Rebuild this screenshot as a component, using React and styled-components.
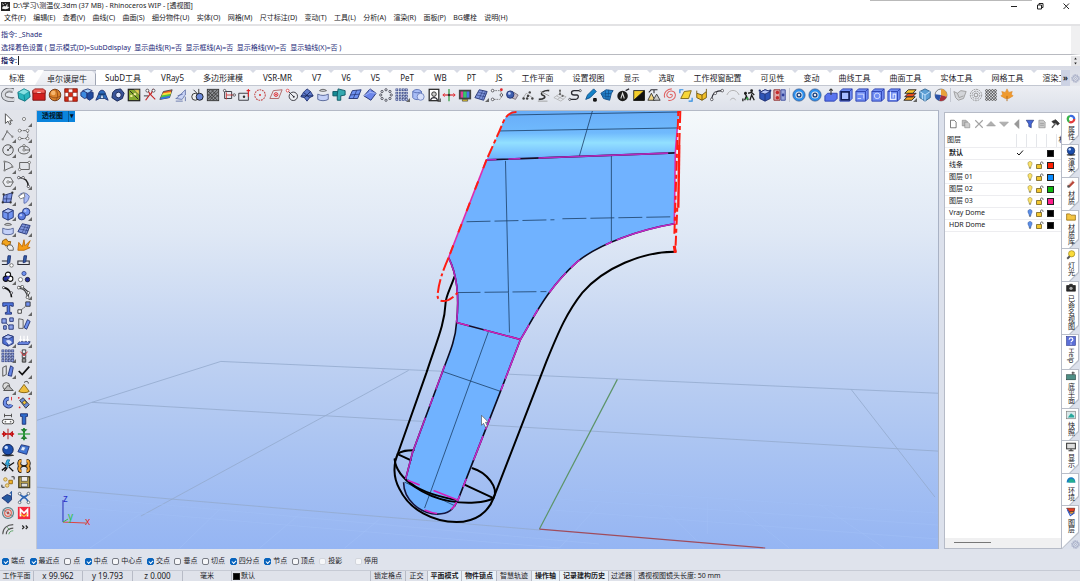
import React, { useState } from 'react';
import styled, { createGlobalStyle, css } from 'styled-components';

const BLUE = '#6f92f0';
const LIGHT = '#b4c6fa';
const NAVY = '#1f2f70';
const INK = '#2b2b33';
const RED = '#e0262b';

const line = (d, stroke = INK, w = 1.2, extra = {}) => (
  <path d={d} fill="none" stroke={stroke} strokeWidth={w} {...extra} />
);
const shape = (d, fill = BLUE, stroke = NAVY, w = 1) => (
  <path d={d} fill={fill} stroke={stroke} strokeWidth={w} strokeLinejoin="round" />
);
const dots = (points, fill = INK, r = 1.4, stroke = 'none') =>
  points.map(([x, y]) => <circle key={`${x}-${y}`} cx={x} cy={y} r={r} fill={fill} stroke={stroke} strokeWidth=".8" />);
const gridSquares = (n, fill, size) => {
  const step = 15 / n;
  return Array.from({ length: n * n }, (_, i) => (
    <rect key={i} x={1 + (i % n) * step} y={1 + Math.floor(i / n) * step} width={size} height={size} fill={fill} stroke={NAVY} strokeWidth=".6" />
  ));
};
const ring = (r, stroke, w = 1, extra = {}) => <circle cx="8" cy="8" r={r} fill="none" stroke={stroke} strokeWidth={w} {...extra} />;
const plane = (fill = BLUE) => <>{shape('M1 12 L5 3 L15 2 L11 12 Z', fill)}{line('M6 12 L10 2.5 M3 8 L13 7', NAVY, 0.8)}</>;
const cube = (fill = BLUE) => (
  <>
    {shape('M2 5 L8 2 L14 4 L14 12 L8 15 L2 12 Z', fill)}
    {shape('M2 5 L8 2 L14 4 L8 7 Z', LIGHT)}
    {line('M8 7 V15', NAVY, 1)}
  </>
);
const slab = (inner) => (
  <>
    {shape('M1 4 L4 1 H15 V12 L12 15 H1 Z', '#6f8cf2', '#2a3fae')}
    {line('M1 4 H12 V15 M12 4 L15 1', '#2a3fae', 1)}
    {inner}
  </>
);

const icons = {
  pipe: <>{line('M14 3 C6 0 0 6 4 11 C7 14 11 13 15 13', '#55585f', 5.4)}{line('M14 3 C6 0 0 6 4 11 C7 14 11 13 15 13', '#d9dbe0', 3.6)}{line('M13 4 C7 2 3 6 6 10 L14 12', '#888', 1)}</>,
  teal: <>{shape('M8 1 L14 4 L15 10 L9 15 L2 12 L1 5 Z', '#28b5bd', '#0f6a78')}{shape('M8 1 L14 4 L8 8 L1 5 Z', '#86e1e3', '#0f8a92', 0.6)}{line('M8 8 L9 15', '#0f8a92')}</>,
  redbox: <>{shape('M1 3 H15 V14 H1 Z', '#d2201f', '#741010')}{shape('M1 3 L3 1 H13 L15 3 V6 H1 Z', '#f0625a', '#941515')}{line('M6 5 H10', '#fff', 1)}</>,
  orange: <><circle cx="8" cy="8" r="6.6" fill="#d9822b" stroke="#6b3410" /><circle cx="6" cy="5.6" r="2.6" fill="#f6b56c" />{line('M2 9 C6 12 10 12 14 9 M8 1 C12 5 12 11 8 15', '#8b4513', 0.9)}</>,
  checker: <><rect x="1" y="1" width="14" height="14" fill="#fff" stroke="#881008" />{shape('M1 1 H5 V5 H1 Z M10 1 H15 V5 H10 Z M5 5 H10 V10 H5 Z M1 10 H5 V15 H1 Z M10 10 H15 V15 H10 Z', '#d92b14', '#76160b', 0.6)}</>,
  cubes: <>{shape('M1 5 L5 3 L8 5 V11 L5 12 L1 9 Z', '#3b8ae0')}{shape('M8 6 L11 4 L15 5 V11 L11 14 L8 12 Z', '#1f4a9e')}{shape('M3 3 L9 1 L14 3 L9 6 Z', '#a5d2ff')}</>,
  arch: <>{shape('M1 14 L4 7 C5 1 11 1 12 7 L15 14 L11 12 H5 Z', '#2c6bbd')}{shape('M6 12 L7 8 H9 L10 12 Z', '#cfe2fb', '#0f2d5d', 0.7)}{line('M4 7 H12', '#0f2d5d', 1.2)}</>,
  hexring: <>{shape('M5 2 L11 1 L15 6 L13 12 L7 15 L1 11 L2 5 Z', '#39549a', '#101f4a')}<circle cx="8.5" cy="8" r="3.2" fill="#dfe7ff" stroke="#101f4a" /></>,
  picture: <><rect x="1.5" y="1.5" width="13" height="13" fill="#86a92f" stroke="#222" strokeWidth="1.4" />{shape('M8 2 H14 V8 Z', '#e8d54e', '#555', 0.6)}{line('M3 3 L13 13', '#222', 1)}{dots([[5, 9], [9, 7]], '#f3ef9a', 1.4)}</>,
  cutred: <>{line('M3 14 L8 7 L14 13 M8 7 L5 2 M9 7 L12 1', '#c52626', 1.3)}{dots([[12, 3], [5, 3]], '#fff', 1.7, INK)}{line('M1 9 L6 9', INK, 1)}</>,
  rainbow: <>{shape('M1 13 L5 4 L15 2 L12 11 Z', '#ef5a24', '#444')}{shape('M3 9 L4.3 6 L14 4.6 L13.2 7 Z', '#f7e13a', 'none')}{shape('M2 11 L3 8.7 L13.3 6.8 L12.6 9 Z', '#45c84a', 'none')}{shape('M1.4 13 L2.2 10.8 L12.7 8.8 L12 11 Z', '#2d76e8', 'none')}</>,
  sheet: <>{shape('M2 12 C5 12 5 8 8 7 L13 2 V8 C11 9 11 12 9 13 Z', '#c9d4f6', '#6474a8')}{line('M4 9 L10 7 M2 15 H10 M13 10 V15', '#6474a8', 1)}</>,
  balls: <><circle cx="6" cy="10" r="4" fill="#eee" stroke="#222" /><circle cx="11" cy="10" r="4" fill="#6a88d8" stroke="#111" /><path d="M4 2 L8 6 M10 1 V6" stroke="#222" /></>,
  hatch: <><rect x="1.5" y="1.5" width="13" height="13" fill="#8e9094" stroke="#333" />{line('M2 5 L5 2 M2 9 L9 2 M2 13 L13 2 M4 14 L14 4 M8 14 L14 8 M2 3 L13 14 M2 7 L9 14 M6 2 L14 10', '#333', 0.9)}</>,
  rectcross: <>{line('M3 4 H11 V12 H3 Z', INK, 1)}{line('M5 8 H15 M5 5 V13', '#c33', 1)}{dots([[3, 3], [14, 8]], '#fff', 1.4, INK)}</>,
  rectarrow: <>{line('M2 6 H13 V14 H2 Z', INK, 1)}{line('M13 1 V10 M11 3 H15', RED, 1.3)}{dots([[8, 10]], '#333', 1.4)}</>,
  circledots: <>{ring(6, '#c24c4c', 1.2, { strokeDasharray: '2 1' })}{dots([[8, 8]], RED, 1.1)}</>,
  rhombus: <>{line('M1 12 L5 3 L15 2 L11 12 Z', '#b06a6a', 1.1)}<circle cx="8" cy="7.5" r="2.2" fill="none" stroke={RED} />{dots([[8, 7.5]], RED, 1)}</>,
  circlepoint: <><circle cx="9.5" cy="9.5" r="4.8" fill="#eceef2" stroke={INK} />{line('M3 3 L10 10', INK, 1)}{dots([[3, 3]], '#fff', 1.6, RED)}{dots([[10, 10]], INK, 1.1)}</>,
  cluster: <>{shape('M8 1 L12 4 L15 9 L11 11 L8 15 L5 11 L1 10 L4 5 Z', '#5d79ca')}{line('M4 5 L11 11 M12 4 L5 11 M1 9 L15 9', '#101f52', 0.9)}</>,
  bowl: <>{shape('M2 7 V13 C5 15 11 15 14 13 V7 C10 9 6 9 2 7 Z', '#c3d0f8', '#4f5f92')}{line('M4 3 C6 1 10 1 12 3 C10 4 6 4 4 3', '#555', 1)}</>,
  clamp: <>{shape('M1 4 H9 V9 H1 Z', '#158a94', '#0b5560')}{shape('M7 1 L15 3 V8 L10 9 V14 H6 V7 Z', '#35a9b0', '#0b5560')}</>,
  plane: plane(),
  diamond: <>{shape('M1 9 L8 1 L15 6 L9 14 Z', '#6c86ea')}{line('M8 1 V5 L1 9 M8 5 L15 6', LIGHT, 0.8)}</>,
  dotring: <>{dots([[8, 2], [12.5, 4], [14, 8], [12.5, 12], [8, 14], [3.5, 12], [2, 8], [3.5, 4]], '#dfe3ef', 1.3, INK)}</>,
  grid4: gridSquares(4, '#b9c6ee', 2.2),
  cyl: <>{shape('M2 4 C4 1 10 1 12 4 V11 C10 14 4 14 2 11 Z', '#a8bdf6', '#546ab0')}<circle cx="11" cy="10" r="4" fill="#d7e0fb" stroke="#6b80bd" />{line('M2 4 C5 6 9 6 12 4', '#546ab0', 1)}</>,
  portrait: <><rect x="2.5" y="1.5" width="11" height="13" fill="#fff" stroke="#222" strokeWidth="1.4" /><circle cx="8" cy="7" r="2.6" fill="#ccc" stroke="#222" />{line('M4 14 C5 10 11 10 12 14', INK, 1.2)}</>,
  axes: <>{line('M1 8 H15', RED, 1.4)}{line('M8 1 V15', '#2d9a3c', 1.4)}{dots([[8, 8]], '#333', 1.4)}{line('M3 6 L1 8 L3 10 M13 6 L15 8 L13 10', RED, 1)}</>,
  monitor: <><rect x="1" y="2" width="14" height="11" fill="#444" /><rect x="3" y="4" width="3" height="7" fill="#e0409a" /><rect x="6" y="4" width="4" height="7" fill="#36c46c" /><rect x="10" y="4" width="3" height="7" fill="#4a78ec" />{shape('M5 13 H11 V15 H5 Z', '#e6c930', '#333', 0.7)}</>,
  meshplane: <>{shape('M1 11 L6 2 L15 4 L11 14 Z', '#7f95dc')}{line('M3 8 L13 10 M5 5 L14 7 M6 12 L10 3 M9 13 L13 4', NAVY, 0.6)}</>,
  curvepts: <>{line('M3 3 H11 C14 4 14 12 11 13 H3', '#777', 1, { strokeDasharray: '2 1' })}{dots([[3, 3], [3, 13], [13, 8]], '#fff', 1.5, INK)}{dots([[13, 2]], RED, 1.6)}</>,
  ballgrey: <>{shape('M10 5 L15 8 L12 13 L7 11 Z', '#c5b9c2', '#77707a')}<circle cx="6" cy="7.5" r="4.2" fill="#3f5faf" stroke={NAVY} /><circle cx="5" cy="6.2" r="1.5" fill="#c0d0fa" /></>,
  points: <>{line('M2 12 L6 6 L13 11', '#999', 0.9)}{dots([[3, 12], [8, 9], [10, 5], [13, 12], [7, 12]], '#444', 1.4)}</>,
  pathpts: <>{line('M2 13 C8 13 12 10 6 8 C3 6 8 2 14 3', '#333', 1.8)}{line('M1 15 H12 M4 4 L14 9', '#999', 1)}</>,
  gridpts: <>{line('M1 11 L7 7 L15 10 L9 15 Z M4 9 L12 13 M11 9 L5 13', '#aaa', 0.8)}{dots([[8, 3], [8, 7], [11, 9]], '#666', 1.2)}{line('M8 3 V7', '#666', 1)}</>,
  scurve: <>{line('M14 3 H7 C3 3 3 8 7 8 H10 C13 8 12 13 9 13 H2', INK, 1.5)}{dots([[14, 3], [2, 13]], '#fff', 1.2, INK)}</>,
  dropper: <>{shape('M2 13 L4 8 L11 1 L14 4 L7 11 Z', '#1583c8', '#0b4d86')}{shape('M11 12 H14 V15 H11 Z', '#222', '#000')}</>,
  meshblue: <>{shape('M1 6 L7 2 L15 3 L13 6 L11 14 L4 12 Z', '#2585cf', '#114a85')}{line('M3 9 L12 10 M6 3 L7 13 M10 2 L9 13 M2 7 L13 6', '#114a85', 0.8)}</>,
  ablack: <><circle cx="7.5" cy="9" r="6" fill="#1c1c1c" />{line('M5.5 12 L7.5 6 L9.5 12', '#ddd', 1.2)}{line('M11 3 L15 1', INK, 1.4)}</>,
  halfsq: <><rect x="2" y="3" width="12" height="11" fill="#f6cf2b" stroke="#222" />{shape('M14 3 V14 H2 Z', '#111', '#111')}</>,
  trilog: <>{shape('M1 14 L5 6 L9 14 Z', '#f0d37c', '#333')}{shape('M7 14 L11 7 L15 14 Z', '#c9c9c9', '#333')}{line('M4 2 H12 M8 2 V6 M2 5 L5 2', INK, 1.2)}</>,
  spiral: line('M8 8 C9 6 12 8 10 10 C7 13 3 9 5 6 C7 2 13 3 14 7 C15 12 10 15 6 14 M2 11 C0 5 5 1 10 1', '#de6262', 1.2),
  yellowplane: <>{shape('M2 12 L6 4 L14 3 L11 12 Z', '#f8d637', '#7a6413')}{line('M1 6 V2 H5 M11 15 H15 V11', '#2c8be0', 1.4)}</>,
  yellowbox: <>{shape('M2 6 L8 8 L13 4 V11 L8 14 L2 11 Z', '#f2c02a', '#6d520b')}{line('M2 3 V6 M13 1 V4 M8 8 V14', '#6d520b', 1)}</>,
  arcpts: <>{line('M2 14 C2 5 8 3 14 3', INK, 1.2)}{dots([[2, 13], [6, 6], [14, 3]], '#fff', 1.5, INK)}</>,
  lightarc: <>{line('M1 8 C4 1 12 1 15 8', '#aaa', 1)}{line('M5 14 C6 11 10 11 11 14', '#aaa', 1)}</>,
  runners: <>{line('M3 14 L5 9 L3 6 M5 9 L7 14 M9 14 L11 8 L14 14 M7 6 L11 5 L14 8 M1 12 V15', '#1c1c1c', 1.5)}{dots([[4, 6], [11, 3]], '#1c1c1c', 1.6)}{dots([[6, 12]], '#36a048', 1.4)}</>,
  bluebox: <>{cube('#2e55b8')}{dots([[2, 3], [14, 3]], '#1b2e70', 1.3)}</>,
  gearred: <>{shape('M1 2 H8 V14 H1 Z', '#dfa9a9', '#8d2d2d')}{dots([[5, 5], [5, 11]], '#c52a2a', 2)}{shape('M9 2 H14 V14 H9 Z', '#98a6dc', '#3a4a9b')}{dots([[11.5, 8]], '#2e3f9c', 1.6)}</>,
  swirl: <>{ring(5.5, '#2c90ee', 2.8)}{ring(7, '#173f7c', 0.7)}{ring(2.2, '#173f7c', 1.5)}</>,
  boxup: <>{shape('M1 9 L4 6 H15 V12 L12 15 H1 Z', '#5a74ee', '#2a3fae')}{line('M8 1 V8 M6 3 L8 1 L10 3', '#333', 1.2)}</>,
  boxdark: <>{slab()}<rect x="2.5" y="4.5" width="9" height="9" fill="#a8bcff" stroke="#101a50" strokeWidth="1.8" /></>,
  slab: slab(line('M3 7 H10 V12 M3 12 H7', '#dbe3ff', 1)),
  slabround: slab(<circle cx="7" cy="9" r="3.2" fill="none" stroke="#dbe3ff" />),
  pane: slab(<>{line('M4 4 V13 H10 V7 H7 V11', '#e8edff', 1.2)}</>),
  stack: <>{shape('M1 14 L5 10 H14 L10 14 Z', '#f5a623', '#222')}{shape('M2 10 L6 6 H15 L11 10 Z', '#e84c22', '#222')}{shape('M2 6 L6 2 H15 L11 6 Z', '#f7c52d', '#222')}</>,
  hex: <>{shape('M8 1 L14 4 V11 L8 15 L2 11 V4 Z', '#5d9fd4', '#2c5f8d')}{line('M2 4 L8 8 L14 4 M8 8 V15 M5 6 V13', '#cfe8ff', 1)}</>,
  pie: <><circle cx="8" cy="8" r="6.8" fill="#e9eef6" stroke="#555" strokeWidth=".8" />{shape('M8 8 V1.2 A6.8 6.8 0 0 1 14.5 10 Z', '#e8a13a', 'none')}{shape('M8 8 L14.5 10 A6.8 6.8 0 0 1 6 14.5 Z', '#a82f3a', 'none')}{shape('M8 8 L6 14.5 A6.8 6.8 0 0 1 1.3 7 Z', '#2a53a8', 'none')}</>,
  cap: <>{shape('M1 4 L5 6 L9 3 L15 4 L12 12 L6 14 L3 11 Z', '#d3d5d9', '#999')}{line('M5 6 L7 11 L12 9', '#999', 1)}</>,
  rings: <>{ring(6.5, '#888', 1, { strokeDasharray: '2 1' })}{ring(4.4, '#888', 1, { strokeDasharray: '2 1' })}{ring(2.2, '#888', 1)}</>,
  hexdots: <>{dots([3, 6.3, 9.7, 13].flatMap(y => [3, 6.3, 9.7, 13].map(x => [x, y])), '#eee', 1.2, '#222')}</>,
  leaf: <>{shape('M8 1 L10 5 L14 4 L13 7 L15 9 L10 12 L6 12 L1 9 L3 7 L2 4 L6 5 Z', '#ef9a2f', '#d98220', 0.6)}{line('M8 9 V15', '#b0630f', 1)}</>,

  cursor: <path d="M5 2 V13 L8 10.5 L10 14.5 L11.5 13.5 L10 10 H13 Z" fill="#fff" stroke="#444" />,
  point: <circle cx="8" cy="8" r="1.8" fill="#fff" stroke="#777" />,
  polyline: <>{line('M2 13 L7 4 L13 10', '#555', 1)}{dots([[2, 13], [7, 4], [13, 10]], '#888', 1.3)}</>,
  curve: <>{line('M3 3 H10 C14 4 13 12 9 12 H3', '#555', 1, { strokeDasharray: '3 1' })}{dots([[3, 3], [12, 3], [3, 12], [12, 12]], '#fff', 1.6, '#555')}</>,
  circle: <>{ring(6, '#555', 1.1)}{line('M8 8 L12 4', '#555', 1)}{dots([[8, 8], [11, 5]], '#555', 1.2)}</>,
  ellipse: <><ellipse cx="8" cy="8" rx="6.5" ry="4.5" fill="none" stroke="#555" /><path d="M8 8 V3 M8 8 H14" stroke="#555" />{dots([[8, 8], [8, 3]], '#fff', 1.3, '#555')}</>,
  arc: <>{line('M4 3 V13 L13 9 C13 6 9 3 4 3', '#555', 1)}{dots([[4, 3], [4, 13], [13, 9]], '#888', 1.3)}</>,
  rect: <>{line('M3 4 H14 V12 H3 Z', '#555', 1)}{dots([[3, 12], [14, 4]], '#fff', 1.4, '#555')}</>,
  polygon: <>{shape('M5 3 H11 L14 8 L11 13 H5 L2 8 Z', '#eef0f4', '#555')}{line('M8 8 H14', '#555', 1)}{dots([[8, 8]], '#fff', 1.4, '#555')}</>,
  fillet: <>{line('M2 3 C9 3 13 7 13 14', '#222', 1.7)}{dots([[2, 3], [7, 3], [13, 13]], '#fff', 1.4, INK)}</>,
  surface: <>{shape('M3 5 L13 2 L11 13 L2 13 Z', '#8199e6')}{line('M7 4 L6 13 M3 9 H12', NAVY, 0.8)}{dots([[3, 4], [13, 2], [11, 13], [2, 13]], '#333', 1.3)}</>,
  sweep: <>{shape('M2 6 C4 1 11 1 14 6 C13 12 10 14 8 14 L8 8 Z', '#a9bbf6', '#5568a8')}{shape('M2 6 L8 2 L9 7 L4 9 Z', '#fff', '#777')}</>,
  cube: cube(),
  spheres: <><circle cx="10.5" cy="5.5" r="4.2" fill={BLUE} stroke={NAVY} /><circle cx="5.5" cy="10.5" r="4.2" fill="#5c7ce0" stroke={NAVY} />{dots([[9.5, 4.3], [4.5, 9.3]], LIGHT, 1.4)}</>,
  puzzle: <>{shape('M2 3 L6 1 L8 4 L11 4 L10 9 L5 9 L4 7 L1 7 Z', '#f3a41c', '#8a5200')}{shape('M8 8 L12 8 L14 11 L14 14 L9 14 L7 11 Z', '#eee', '#555')}</>,
  burst: shape('M1 14 L2 5 L6 10 L8 2 L9 9 L15 3 L12 10 L15 11 L8 14 Z', '#f59b14', '#c06a06'),
  trim: <>{line('M1 8 H7 M1 12 H7', INK, 1.3)}{shape('M7 12 L8 2 L11 2 L10 10 Z', '#315ea8')}{dots([[12, 13]], '#fff', 2, '#555')}</>,
  split: <>{line('M1 8 H14 V12 H1 Z', INK, 1.2)}{shape('M7 10 L8 2 L11 2 L10 9 Z', '#315ea8')}</>,
  union: <><circle cx="8" cy="5.4" r="3" fill="#fff" stroke="#111" strokeWidth="1.2" /><circle cx="5.4" cy="10" r="3" fill="#24309a" stroke="#111" strokeWidth="1.2" /><circle cx="10.6" cy="10" r="3" fill="#fff" stroke="#111" strokeWidth="1.2" />{dots([[8, 8.5]], '#333ba8', 1.8)}</>,
  three: <>{dots([[8, 4]], BLUE, 2.4, NAVY)}{dots([[4, 11]], '#fff', 2.4, '#555')}{dots([[12, 11]], '#24309a', 2.6, '#111')}</>,
  arcblack: <>{line('M2 3 C8 3 12 8 12 14', '#111', 1.9)}{dots([[3, 3], [12, 9]], '#fff', 1.3, INK)}</>,
  arcnodes: <>{line('M2 2 H6 L13 8 V14 M3 4 C9 4 11 9 12 14', '#333', 1.2)}{dots([[6, 2], [13, 9], [12, 14], [2, 3]], '#fff', 1.6, '#333')}</>,
  text: shape('M2 2 H14 V6 H12 V5 H10 V13 H12 V15 H5 V13 H7 V5 H5 V6 H2 Z', '#4f76e2'),
  scale: <>{shape('M1 10 H5 V14 H1 Z', '#fff', '#333')}{shape('M10 1 H15 V6 H10 Z', '#6f8ff0', '#333')}{line('M5 10 L10 6', '#333', 1, { strokeDasharray: '2 1' })}</>,
  boxes: <>{shape('M1 2 H6 V7 H1 Z M10 1 H14 V5 H10 Z M3 10 H6 V14 H3 Z M9 9 H14 V14 H9 Z', '#8ea4ea')}{line('M6 7 L9 10', NAVY, 1)}</>,
  rotateblue: <>{line('M2 2 V13 H7 V3 Z', '#555', 1)}{shape('M8 12 L12 3 L15 5 L11 14 Z', BLUE)}</>,
  boxround: <>{cube('#4e70d6')}{shape('M5 9 C8 6 12 8 13 11 L9 14 Z', '#dbe4ff', '#4e64b0')}</>,
  lights: <>{shape('M1 12 L3 10 H15 L13 13 H1 Z', '#7190f0')}{line('M4 3 V9 M8 3 V9 M12 3 V9 M3 7 L4 9 L5 7 M7 7 L8 9 L9 7 M11 7 L12 9 L13 7', '#fff', 1.3)}</>,
  grid3: gridSquares(4, '#8fa0dc', 2.4),
  column: <>{shape('M6 1 H10 V5 H6 Z M6 6 H10 V10 H6 Z', '#e8ebf2', '#333')}{shape('M6 11 H10 V15 H6 Z', '#999', '#333')}{line('M4 3 L8 8 L12 3', RED, 1)}</>,
  mirror: <>{line('M2 4 L6 2 V12 L2 14 Z', '#555', 1.1)}{shape('M8 13 L11 2 L14 4 L12 14 Z', '#6685e6')}</>,
  check: line('M2 8 L6 12 L14 3', '#111', 2),
  shapes: <><circle cx="6" cy="7" r="4" fill="#ddd" stroke="#555" />{shape('M3 12 L8 6 L14 12 Z', '#bbb', '#444')}</>,
  cone: <>{shape('M2 13 L8 5 L14 13 C11 15 5 15 2 13 Z', '#efbe3c', '#7d5d10')}{line('M8 3 C10 1 13 1 13 4', '#333', 1.1)}</>,
  hook: <>{line('M9 3 C4 3 3 9 6 11 C9 13 11 12 12 10', NAVY, 4.4)}{line('M9 3 C4 3 3 9 6 11 C9 13 11 12 12 10', '#6e8fe8', 2.6)}{line('M12 1 V5', RED, 1)}</>,
  capsule: <>{shape('M3 5 L7 2 L14 10 L10 14 Z', '#6c8bd6', '#333')}{shape('M6 7 L9 5 L11 8 L8 10 Z', '#f2c53a', '#333', 0.7)}{dots([[2, 2], [14, 3], [3, 13]], RED, 1)}</>,
  link: <>{line('M4 2 V6 M12 2 V6 M4 4 H12', '#444', 1)}<rect x="1.5" y="8.5" width="13" height="5" rx="2.5" fill="#fff" stroke="#333" />{dots([[5, 11], [11, 11]], '#777', 1)}</>,
  bolt: shape('M4 2 H12 V5 H10 V14 H6 V5 H4 Z', '#2f6ccc'),
  hsplit: <>{line('M1 8 H15', RED, 2)}{shape('M6 8 L3 5 V11 Z M10 8 L13 5 V11 Z', RED, '#a00')}{line('M8 2 V14', '#a33', 1.2)}</>,
  vsplit: <>{line('M8 1 V15', '#2c9a3a', 2.2)}{line('M1 8 H15', '#2c9a3a', 1.4)}{shape('M8 6 L5 3 H11 Z M8 10 L5 13 H11 Z', '#2c9a3a', '#156b22')}</>,
  ball: <><ellipse cx="8" cy="14" rx="7" ry="1.4" fill="#333" /><circle cx="8" cy="7.5" r="6" fill="#1c4fae" stroke="#0b1d4a" /><circle cx="6" cy="5" r="2" fill="#c7dcff" /></>,
  book: <>{shape('M1 10 L5 2 L14 4 L11 13 Z', '#3f76d6')}{shape('M4 8 L6 4 L10 5 L8 9 Z', '#e2edff', '#3558a0', 0.6)}</>,
  lightning: <>{line('M1 4 L6 8 M15 4 L9 8 M1 13 L6 9 M14 14 L9 9 M4 14 L7 10', '#111', 1.5)}{shape('M7 1 L10 1 L8 5 H10 L7 10 L7 6 H5 Z', '#39b6e8', '#1470a0')}</>,
  brackets: <>{line('M5 2 C2 2 2 7 4 8 C2 9 2 14 5 14 M11 2 C14 2 14 7 12 8 C14 9 14 14 11 14', '#111', 4.4)}{line('M5 2 C2 2 2 7 4 8 C2 9 2 14 5 14 M11 2 C14 2 14 7 12 8 C14 9 14 14 11 14', '#f2a12c', 2.6)}{line('M5 8 H11', '#111', 1.4)}</>,
  yellowdots: <>{line('M1 14 H4 M12 2 H15 M1 11 V14 M15 2 V5', '#333', 1.2)}{dots([[5, 5], [7, 12]], '#f2d98c', 2, '#a87a1a')}{shape('M9 6 H13 V10 H9 Z', '#f2b42c', '#94660c')}</>,
  floppy: <><rect x="2" y="2" width="12.5" height="12.5" fill="#b39a4a" stroke="#3b3418" strokeWidth="1.3" /><rect x="5" y="2" width="7" height="5" fill="#eee" stroke="#333" strokeWidth=".6" /><rect x="5" y="9.5" width="7" height="4" fill="#ddd" stroke="#333" strokeWidth=".6" /></>,
  bluesolid: <>{shape('M1 8 L7 4 L12 6 L12 10 L8 14 L5 11 Z', '#2659a0')}{line('M10 3 L12 1 V6', '#2659a0', 1.2)}</>,
  cage: <>{line('M3 3 C6 8 10 8 13 3 M3 13 C6 6 10 6 13 13', '#2e66b4', 1.8)}{dots([[3, 3], [13, 3], [3, 13], [13, 13]], '#fff', 1.5, '#345')}</>,
  target: <>{ring(6.2, '#5c8088', 1.4)}{ring(3.8, '#e26a5a', 1.4)}{dots([[8, 8]], '#d43b2f', 1.6)}{line('M2 4 L14 12', '#5c8088', 0.8)}</>,
  mlogo: <><rect x="1" y="1" width="14" height="14" fill="#f3283e" />{line('M4 12 V4 L8 8 L12 4 V12', '#fff', 2)}{line('M4 9 L8 12 L12 9', '#ffc32b', 1.4)}</>,
  offset: <>{line('M2 14 C2 7 7 3 14 3', '#555', 1.2)}{line('M6 14 C6 10 9 7 14 7', '#555', 1.2)}{line('M9 14 C9 12 11 10 14 10 M7 6 L10 9', '#4b9a55', 1)}</>,
  more: line('M6 4 L8 6 L6 8 M10 4 L12 6 L10 8', '#222', 1.3),

  page: shape('M4 2 H10 L13 5 V14 H4 Z', '#fff', '#333'),
  pages: <>{shape('M2 2 H8 L10 4 V11 H2 Z', '#bbb', '#888')}{shape('M6 5 H11 L14 8 V14 H6 Z', '#ccc', '#888')}</>,
  cross: line('M2 2 L14 14 M14 2 L2 14', '#a2a2a2', 1.8),
  up: shape('M1 11 L8 4 L15 11 Z', '#b0b0b0', '#999'),
  down: shape('M1 5 L8 12 L15 5 Z', '#b0b0b0', '#999'),
  left: shape('M11 1 L4 8 L11 15 Z', '#999', '#888'),
  filter: shape('M2 2 H14 L10 8 V14 L6 12 V8 Z', '#4567d8'),
  paste: <>{shape('M3 2 H10 L13 5 V14 H3 Z', '#ccc', '#888')}{line('M5 7 H11 M5 10 H11', '#888', 1)}</>,
  hammer: <>{shape('M3 4 L9 1 L15 7 L12 10 L9 6 L6 7 Z', '#333', '#222')}{line('M9 7 L3 14', '#555', 2.2)}</>,
  bulb: <>{shape('M8 1 C3 1 3 7 6 10 V13 H10 V10 C13 7 13 1 8 1 Z', '#fbe36a', '#8a7a2c')}{line('M6 14.5 H10', '#666', 1.4)}</>,
  bulboff: <>{shape('M8 1 C3 1 3 7 6 10 V13 H10 V10 C13 7 13 1 8 1 Z', '#5c8fe8', '#2f529a')}{line('M6 14.5 H10', '#444', 1.4)}</>,
  lock: <>{shape('M1 7 H11 V15 H1 Z', '#f3c72f', '#5f4c0e', 1.4)}{line('M9 7 V4 C9 1 14 1 14 4 V6', '#555', 1.6)}</>,

  wheel: <>{ring(5.2, '#e23b3b', 3.6, { strokeDasharray: '11 22' })}{ring(5.2, '#38b54a', 3.6, { strokeDasharray: '11 22', strokeDashoffset: -11 })}{ring(5.2, '#3a6be0', 3.6, { strokeDasharray: '11 22', strokeDashoffset: -22 })}</>,
  tube: <>{line('M4 12 L12 4', '#b8463a', 5)}{line('M3 10 L10 3', '#f2e2da', 2)}{dots([[4, 12]], '#555', 2)}</>,
  folder: shape('M1 3 H6 L8 5 H15 V13 H1 Z', '#f4c542', '#94690c', 1.2),
  lamp: <><circle cx="9" cy="6" r="5" fill="#fadb3a" stroke="#927a14" />{line('M6 10 L2 14', '#555', 3)}</>,
  camera: <>{shape('M1 4 H5 L6 2 H10 L11 4 H15 V13 H1 Z', '#2b2b2b', '#111')}<circle cx="8" cy="8.5" r="2.6" fill="#aaa" /></>,
  help: <><rect x="1" y="1" width="14" height="14" fill="#5b6fd8" stroke="#2d3a8c" />{line('M5 6 C5 2 11 2 11 6 C11 8 8 8 8 10 M8 12 V13.5', '#fff', 1.8)}</>,
  cplane: <><rect x="1" y="6" width="14" height="8" fill="#4f8f86" stroke="#1e3f3b" />{line('M9 3 H14 M11 1 V6', '#333', 1.4)}</>,
  photo: <><rect x="1" y="2" width="14" height="12" fill="#d9e8ea" stroke="#777" />{shape('M3 12 L8 5 L13 9 V12 Z', '#29a89c', 'none')}</>,
  screen: <><rect x="1" y="2" width="14" height="9" fill="#ddd" stroke="#333" strokeWidth="1.6" />{line('M8 11 V14 M4 14 H12', '#333', 1.6)}</>,
  env: <>{shape('M1 12 C1 1 15 1 15 12 Z', '#1b7fc0', 'none')}{shape('M4 12 C4 5 12 4 15 12 Z', '#23b08e', 'none')}</>,
  layers: <>{shape('M1 2 H14 L13 7 L6 8 Z', '#e43d24', '#5a140a')}{shape('M4 8 L13 7 L10 12 Z', '#f1a13c', '#333')}{line('M2 4 L7 14 L14 9', '#2e55c8', 1.8)}</>,
  gear: <>{ring(5, '#8f98b8', 1.4)}{ring(6.8, '#8f98b8', 1.6, { strokeDasharray: '2 2.2' })}{ring(1.8, '#8f98b8', 1)}</>,
  spinup: shape('M4 11 L8 5 L12 11 Z', '#222', 'none'),
  spindown: shape('M4 5 L8 11 L12 5 Z', '#222', 'none'),
  app: <><rect x="0" y="0" width="16" height="16" fill="#222" />{shape('M2 12 C2 7 6 6 8 8 L12 3 L11 8 L15 9 L12 12 L8 13 Z', '#f3f3f3', 'none')}{line('M2 3 L5 5 M7 2 L9 4', '#ddd', 1.6)}</>,
};

const topGroups = [
  'pipe teal redbox orange checker cubes arch hexring picture cutred rainbow sheet balls hatch rectcross rectarrow circledots rhombus circlepoint cluster bowl clamp plane diamond dotring grid4 cyl portrait axes monitor meshplane curvepts ballgrey points pathpts gridpts scurve dropper meshblue ablack halfsq trilog spiral yellowplane yellowbox arcpts lightarc runners bluebox gearred',
  'swirl swirl boxup boxdark slab slabround pane stack hex pie',
  'cap rings hexdots leaf',
].map(group => group.split(' '));

const flagged = ['grid4', 'portrait', 'meshplane', 'stack'];

const sideIcons = (
  'cursor point polyline curve circle ellipse arc rect polygon fillet surface sweep cube spheres bowl meshplane ' +
  'puzzle burst trim split union three arcblack arcnodes text scale boxes rotateblue boxround lights grid3 column ' +
  'mirror check shapes cone hook capsule link bolt hsplit vsplit ball book lightning brackets yellowdots floppy ' +
  'bluesolid cage target mlogo offset more'
).split(' ');

const sideFlagged = [
  'point', 'polyline', 'curve', 'circle', 'ellipse', 'arc', 'rect', 'polygon', 'fillet', 'surface', 'sweep', 'cube',
  'spheres', 'bowl', 'meshplane', 'union', 'arcnodes', 'scale', 'boxround', 'lights', 'grid3', 'column', 'mirror',
  'check', 'shapes', 'cone',
];

const menus = [
  '文件(F)', '编辑(E)', '查看(V)', '曲线(C)', '曲面(S)', '细分物件(U)', '实体(O)', '网格(M)', '尺寸标注(D)', '变动(T)',
  '工具(L)', '分析(A)', '渲染(R)', '面板(P)', 'BG螺栓', '说明(H)',
];

const toolTabs = [
  '标准', '卓尔谟犀牛', 'SubD工具', 'VRay5', '多边形建模', 'VSR-MR', 'V7', 'V6', 'V5', 'PeT', 'WB', 'PT', 'JS', '工作平面',
  '设置视图', '显示', '选取', '工作视窗配置', '可见性', '变动', '曲线工具', '曲面工具', '实体工具', '网格工具', '渲染工具',
];

const layers = [
  { name: '默认', color: '#000', current: true },
  { name: '线条', color: '#ff1e00', on: true },
  { name: '图层 01', color: '#0a8cff', on: true },
  { name: '图层 02', color: '#0db80d', on: true },
  { name: '图层 03', color: '#ff1e8c', on: true },
  { name: 'Vray Dome', color: '#000' },
  { name: 'HDR Dome', color: '#000' },
];

const panelTabs = [
  ['属性', 'wheel', 32], ['渲染', 'ball', 33], ['材质', 'tube', 33], ['材质库', 'folder', 38], ['灯光', 'lamp', 33],
  ['已命名视图', 'camera', 53], ['Help', 'help', 35], ['底平面', 'cplane', 39], ['快照', 'photo', 32], ['显示', 'screen', 33],
  ['环境', 'env', 32], ['图层', 'layers', 36],
];

const snaps = [
  ['端点', true], ['最近点', true], ['点', false], ['中点', true], ['中心点', false], ['交点', true], ['垂点', false],
  ['切点', false], ['四分点', true], ['节点', true], ['顶点', false], ['投影', false, true], ['停用', false, true],
];

const GlobalStyle = createGlobalStyle`
  * { box-sizing: border-box; }

  body {
    margin: 0;
    color: #1a1a1e;
    background: #dfe3ec;
    font-family: "Noto Sans", "Noto Sans CJK SC", sans-serif;
    font-size: 7px;
    line-height: 10px;
  }

  button, input {
    margin: 0;
    padding: 0;
    border: none;
    background: none;
    color: inherit;
    font: inherit;
  }
`;

function Icon({ name, size = 14 }) {
  return <Svg viewBox="0 0 16 16" $size={size} aria-hidden="true">{icons[name]}</Svg>;
}

function Tool({ name, flag }) {
  return (
    <ToolButton type="button" aria-label={name} $flag={flag}>
      <Icon name={name} />
    </ToolButton>
  );
}

function Model() {
  const upper = 'M513 111 L680 111 L678 128 L676 153 L675 224 C640 230 600 244 578 262 C547 290 536 315 521 340 L457 323 C459 305 460 280 449 258 L487 160 L500 131 C504 121 506 115 513 111 Z';
  const lower = 'M457 323 C456 342 448 358 443 372 L413 453 L406 480 C401 498 419 515 438 515 C449 515 453 511 458 502 L501 392 L521 340 Z';
  const rightSide = 'M675 224 C640 230 600 244 578 262 C547 290 536 315 521 340 L501 392 L458 502';
  const leftSide = 'M449 258 C460 280 459 305 457 323 C456 342 448 358 443 372 L413 453 L406 480';
  return (
    <Scene viewBox="37 111 902 439" preserveAspectRatio="none" role="img" aria-label="透视图">
      <defs>
        <linearGradient id="band" x1="0" y1="111" x2="0" y2="160" gradientUnits="userSpaceOnUse">
          <stop offset="0" stopColor="#68adf8" />
          <stop offset=".45" stopColor="#70bafd" />
          <stop offset=".65" stopColor="#92e0ff" />
          <stop offset=".95" stopColor="#70b5ff" />
        </linearGradient>
      </defs>
      <g fill="none" stroke="#93aacd" strokeWidth=".8">
        <path d="M37 421 L92 403 L221 362 L941 394 M92 403 L941 452 M409 371 L141 517 M852 390 L936 498 M37 488 L172 500 L541 531" />
      </g>
      <path
        d="M37 505 L560 549 M100 500 L600 545 M541 510 L939 540 M560 500 L939 526 M580 490 L939 514 M660 505 L705 549 M735 505 L790 549 M820 505 L885 549 M600 505 L560 549 M140 515 L90 549 M220 510 L180 549 M300 515 L260 549 M380 520 L345 549 M708 500 V535"
        fill="none"
        stroke="#a2c0f7"
        strokeWidth=".5"
      />
      <path d="M618 380 L540 530" stroke="#5c9468" strokeWidth="1.2" />
      <path d="M540 530 L766 549" stroke="#a04c5c" strokeWidth="1.2" />

      <path d={upper} fill="#70b2ff" />
      <path d="M513 111 H680 L676 153 L487 160 L500 131 C504 121 506 115 513 111 Z" fill="url(#band)" />
      <path d={lower} fill="#70b2ff" />
      <g fill="none" stroke="#1c3f66" strokeWidth=".8">
        <path d="M510 115 L680 112 M500 131 L678 128 M593 111 L580 156 M506 161 L509 293 L510 333 M612 155 V242" />
        <path d="M467 222 L555 220 M563 219 L675 217 M457 293 L547 292" strokeDasharray="24 4" />
        <path d="M489 332 L432 490 L425 509 M443 372 L501 392 M405 483 L456 507" />
      </g>

      <g fill="none" stroke="#000" strokeWidth="2" strokeLinecap="round">
        <path d="M455 277 C450 291 446 297 446 304 C445 325 437 342 427 373 L398 455 C394 464 393 478 400 490 C410 511 434 523 457 523 C476 523 489 513 494 499 L547 362 C560 330 568 312 583 293 C605 268 643 252 676 252" />
        <path d="M395 460 C397 481 427 498 450 502 C467 505 486 504 494 499 C500 489 487 473 473 469 M398 455 C402 451 408 451 414 451 M398 455 L411 461 M466 486 L494 499" />
      </g>
      <path d="M408 481 Q420 494 457 501" fill="none" stroke="#000" strokeWidth="1.6" />

      <g fill="none" strokeWidth="1.6">
        <path d={rightSide} stroke="#0c0c20" />
        <path d={leftSide} stroke="#0c0c20" />
        <path d="M404 483 C404 500 420 515 438 515 C449 515 453 511 458 502" stroke="#161640" />
        <path d="M487 160 L676 153 M457 323 L521 340" stroke="#170d28" />
        <path d={rightSide} stroke="#c527c9" strokeDasharray="60 5 7 30 12 7 26 20 9 9" />
        <path d={leftSide} stroke="#b526bd" strokeDasharray="66 45 26 8 10 12" />
        <path d="M487 160 L676 153" stroke="#b52abf" strokeDasharray="10 12 12 18 130" />
        <path d="M457 323 L521 340 M408 481 L458 501 M425 511 C441 518 452 514 457 503" stroke="#d420bd" strokeDasharray="13 15 60" />
        <path d="M487 160 L449 258" stroke="#df2bb0" />
        <path d="M678 128 L676 153 L675 224" stroke="#df2bb0" />
      </g>
      <g fill="none" stroke="#ff1d12" strokeWidth="2">
        <path d="M517 112 C506 112 504 122 500 131 L487 160" strokeDasharray="12 3 4 3" />
        <path d="M487 160 L449 258" strokeDasharray="9 14" />
        <path d="M449 258 C443 272 439 283 438 296 C438 305 451 302 458 293" strokeDasharray="14 3 3 3" />
        <path d="M678 112 H681 L680 145" strokeDasharray="14 3 4 3" />
        <path d="M680 145 L679 208" strokeWidth="2.4" />
        <path d="M678 208 L676 253 M679 112 L675 237" strokeDasharray="4 3 10 4" />
        <path d="M675 246 L676 253" strokeWidth="3" />
      </g>

      <path d="M63 523 V501" stroke="#2a30b8" />
      <path d="M63 523 L86 524" stroke="#e0423e" />
      <path d="M63 523 L68 520" stroke="#2fc23f" />
      <AxisLabel x="63" y="503" fill="#2a30c8">z</AxisLabel>
      <AxisLabel x="68" y="521" fill="#2fc23f">y</AxisLabel>
      <AxisLabel x="85" y="526" fill="#e0302c">x</AxisLabel>
      <path d="M482 416 V426 L484 424 L486 428 L488 427 L486 423 H489 Z" fill="#fff" stroke="#444" strokeWidth=".6" />
    </Scene>
  );
}

function LayersPanel() {
  return (
    <Panel>
      <PanelTools>
        {['page', 'pages', 'cross', 'up', 'down', 'left', 'filter', 'paste', 'hammer'].map(name => (
          <PanelButton key={name} type="button" aria-label={name}><Icon name={name} size={10} /></PanelButton>
        ))}
      </PanelTools>
      <LayerTable>
        <thead>
          <tr>
            <th>图层</th>
            <IconHead /><IconHead /><IconHead /><IconHead /><IconHead>材</IconHead>
          </tr>
        </thead>
        <tbody>
          {layers.map(({ name, color, current, on }) => (
            <LayerRow key={name} $current={current}>
              <td>{name}</td>
              <td>{current && <Icon name="check" size={8} />}</td>
              <td>{!current && <Icon name={on ? 'bulb' : 'bulboff'} size={8} />}</td>
              <td>{!current && <Icon name="lock" size={8} />}</td>
              <td><Swatch $color={color} /></td>
              <td />
            </LayerRow>
          ))}
        </tbody>
      </LayerTable>
      <ScrollTrack><ScrollThumb /></ScrollTrack>
    </Panel>
  );
}

function App() {
  const [activeTab, setActiveTab] = useState('卓尔谟犀牛');
  const [command, setCommand] = useState('');

  return (
    <Window>
      <GlobalStyle />
      <TitleBar>
        <Icon name="app" size={9} />
        <Title>D:\学习\测温仪.3dm (37 MB) - Rhinoceros WIP - [透视图]</Title>
        <ShareBar />
        <WindowButton type="button" aria-label="最小化"><svg width="7" height="7"><path d="M0 3.5 H6" stroke="#222" /></svg></WindowButton>
        <WindowButton type="button" aria-label="还原"><svg width="7" height="7"><path d="M.5 2 H4.5 V6 H.5 Z M2 2 V.5 H6 V4.5 H4.5" fill="none" stroke="#222" /></svg></WindowButton>
        <WindowButton type="button" aria-label="关闭"><svg width="7" height="7"><path d="M.5 .5 L6 6 M6 .5 L.5 6" stroke="#222" /></svg></WindowButton>
      </TitleBar>
      <MenuBar>
        <Menus>{menus.map(menu => <button key={menu} type="button">{menu}</button>)}</Menus>
      </MenuBar>

      <History>
        <p>指令: _Shade</p>
        <p>选择着色设置 ( 显示模式(D)=SubDdisplay&nbsp; 显示曲线(R)=否&nbsp; 显示框线(A)=否&nbsp; 显示格线(W)=否&nbsp; 显示轴线(X)=否 )</p>
      </History>
      <Prompt>
        <label htmlFor="command">指令:</label>
        <Caret />
        <input id="command" value={command} onChange={e => setCommand(e.target.value)} />
        <Spinner>
          <button type="button" aria-label="上"><Icon name="spinup" size={5} /></button>
          <button type="button" aria-label="下"><Icon name="spindown" size={5} /></button>
        </Spinner>
      </Prompt>

      <TabStrip>
        <Tabs>
          {toolTabs.map(tab => (
            <TabButton
              key={tab}
              type="button"
              $active={tab === activeTab}
              $latin={/^[\w-]+$/.test(tab)}
              onClick={() => setActiveTab(tab)}
            >
              {tab}
            </TabButton>
          ))}
        </Tabs>
        <MoreTabs type="button">»</MoreTabs>
        <StripGear><Icon name="gear" size={9} /></StripGear>
      </TabStrip>
      <Toolbar>
        {topGroups.map((group, i) => (
          <React.Fragment key={i}>
            {i > 0 && <Separator />}
            {group.map((name, j) => <Tool key={j} name={name} flag={flagged.includes(name)} />)}
          </React.Fragment>
        ))}
      </Toolbar>

      <Workspace>
        <SideBar>
          {sideIcons.map(name => <Tool key={name} name={name} flag={sideFlagged.includes(name)} />)}
        </SideBar>
        <Viewport>
          <Model />
          <ViewTitle type="button"><span>透视图</span><i>▾</i></ViewTitle>
        </Viewport>
        <LayersPanel />
        <PanelTabs>
          {panelTabs.map(([label, icon, size]) => (
            <PanelTab key={label} type="button" $size={size}>
              <Icon name={icon} size={10} />
              <span>{label}</span>
            </PanelTab>
          ))}
          <PanelGear><Icon name="gear" size={9} /></PanelGear>
        </PanelTabs>
      </Workspace>

      <SnapBar>
        {snaps.map(([label, checked, faint]) => (
          <SnapLabel key={label}>
            <SnapBox type="checkbox" defaultChecked={checked} $faint={faint} />
            {label}
          </SnapLabel>
        ))}
      </SnapBar>
      <StatusBar>
        <Cell $w={34}>工作平面</Cell>
        <Cell $w={49} $large>x 99.962</Cell>
        <Cell $w={50} $large>y 19.793</Cell>
        <Cell $w={50} $large>z 0.000</Cell>
        <Cell $w={49}>毫米</Cell>
        <Cell $w={139} $left><Swatch $color="#000" />默认</Cell>
        <Cell $w={35}>锁定格点</Cell>
        <Cell $w={22}>正交</Cell>
        <Cell $w={34} $on>平面模式</Cell>
        <Cell $w={35} $on>物件锁点</Cell>
        <Cell $w={35}>智慧轨迹</Cell>
        <Cell $w={28} $on>操作轴</Cell>
        <Cell $w={49} $on>记录建构历史</Cell>
        <Cell $w={26}>过滤器</Cell>
        <LensCell>透视视图镜头长度: 50 mm</LensCell>
      </StatusBar>
    </Window>
  );
}

const Svg = styled.svg`
  display: block;
  flex: none;
  width: ${p => p.$size}px;
  height: ${p => p.$size}px;
`;

const Window = styled.div`
  display: flex;
  flex-direction: column;
  min-height: 100vh;
`;

const TitleBar = styled.header`
  position: relative;
  display: flex;
  align-items: center;
  height: 12px;
  padding: 0 7px 0 1px;
  background: #fff;
`;

const Title = styled.span`
  flex: 1;
  padding-left: 3px;
  font-size: 7px;
  white-space: nowrap;
`;

const ShareBar = styled.div`
  position: absolute;
  top: 0;
  right: 48px;
  width: 15%;
  height: 1px;
  background: #b9b9b9;
`;

const WindowButton = styled.button`
  display: grid;
  place-items: center;
  width: 14px;
  height: 12px;
  margin-left: 12px;
`;

const MenuBar = styled.nav`
  height: 14px;
  padding: 1px 4px 0;
  background: #fff;
  border-bottom: 2px solid #e3e3e5;
`;

const Menus = styled.div`
  display: flex;
  justify-content: space-between;
  width: 47%;
  white-space: nowrap;
`;

const History = styled.div`
  height: 29px;
  padding: 4px 0 0 1px;
  background: #fff;
  border-bottom: 1px solid #b8bac0;
  border-right: 9px solid #f0f0f1;
  color: #1c2a78;
  white-space: nowrap;

  p {
    margin: 0 0 3px;
  }
`;

const Prompt = styled.div`
  display: flex;
  align-items: center;
  height: 11px;
  padding-left: 1px;
  background: #fff;

  label {
    color: #16225f;
    font-weight: 600;
  }

  input {
    flex: 1;
    outline: none;
  }
`;

const Caret = styled.span`
  width: 1px;
  height: 9px;
  margin-left: 1px;
  background: #222;
`;

const Spinner = styled.div`
  display: grid;
  justify-items: center;
  width: 9px;
  background: #e6e6e8;

  button {
    height: 5px;
  }
`;

const TabStrip = styled.div`
  display: flex;
  align-items: end;
  height: 20px;
  background: linear-gradient(#d8dbe5, #e6e8ee);
`;

const Tabs = styled.nav`
  display: flex;
  flex: 1;
  min-width: 0;
  height: 16px;
  overflow: hidden;
  background: #fff;
  border-bottom: 1px solid #c3c7d1;
`;

const TabButton = styled.button`
  position: relative;
  flex: none;
  padding: 0 10px 0 ${p => (p.$latin ? 10 : 9)}px;
  font-size: 8px;
  line-height: 15px;
  white-space: nowrap;

  &::after {
    content: '';
    position: absolute;
    top: 0;
    right: -3px;
    border: 3px solid transparent;
    border-top-color: #d8dbe5;
    border-bottom: none;
  }

  ${p => p.$active && css`
    padding: 0 8px 0 12px;
    background: linear-gradient(#f4f5f8, #e9ebf1);
    clip-path: polygon(0 100%, 9px 0, 100% 0, 100% 100%);
    border-right: 1px solid #9fa5b3;
    border-top: 1px solid #b9bdc8;
  `}
`;

const MoreTabs = styled.button`
  width: 9px;
  height: 16px;
  background: #ccd2e4;
  font-size: 8px;
  font-weight: 700;
  line-height: 14px;
`;

const StripGear = styled.span`
  display: grid;
  place-items: center;
  width: 10px;
  height: 16px;
`;

const Toolbar = styled.div`
  display: flex;
  align-items: center;
  height: 24px;
  padding: 0 65px 6px 0;
  background: linear-gradient(#eceef3, #dde1ea);
`;

const Separator = styled.span`
  flex: none;
  width: 1px;
  height: 14px;
  margin: 0 1px;
  background: #c4c8d2;
`;

const ToolButton = styled.button`
  position: relative;
  display: grid;
  place-items: center;
  flex: 1;
  min-width: 0;
  min-height: 0;

  ${p => p.$flag && css`
    &::after {
      content: '';
      position: absolute;
      right: 0;
      bottom: 0;
      border-left: 4px solid transparent;
      border-bottom: 4px solid #666;
    }
  `}
`;

const Workspace = styled.main`
  display: flex;
  flex: 1;
  background: #dce1ec;
`;

const SideBar = styled.aside`
  display: grid;
  grid-template-columns: repeat(2, 16px);
  grid-auto-rows: minmax(0, 1fr);
  width: 37px;
  padding: 1px 0 12px;
  background: #e2e4ea;
  border-right: 1px solid #c2c7d2;
`;

const Viewport = styled.section`
  position: relative;
  flex: 1;
  min-width: 0;
  background: linear-gradient(#f5f9fb, #dfe8f5 28%, #c3d4f2 52%, #a9c3f2 78%, #95b5f3);
  border-top: 1px solid #b4bac6;
  border-right: 1px solid #a9b2c4;
`;

const Scene = styled.svg`
  position: absolute;
  inset: 0;
  width: 100%;
  height: 100%;
`;

const AxisLabel = styled.text`
  font-size: 10px;
`;

const ViewTitle = styled.button`
  position: absolute;
  top: 0;
  left: 0;
  display: flex;
  height: 11px;
  background: #0a84dc;
  color: #021426;
  font-weight: 600;
  line-height: 10px;

  span {
    padding: 0 5px;
  }

  i {
    width: 7px;
    border-left: 1px solid #075c9c;
    font-style: normal;
  }
`;

const Panel = styled.section`
  display: flex;
  flex-direction: column;
  width: 118px;
  margin: 2px 0 0 5px;
  background: #fff;
  border: 1px solid #b6bbc7;
`;

const PanelTools = styled.div`
  display: flex;
  justify-content: space-between;
  padding: 6px 1px 5px 3px;
`;

const PanelButton = styled.button`
  flex: none;
`;

const LayerTable = styled.table`
  width: 100%;
  border-collapse: collapse;
  table-layout: fixed;

  th, td {
    height: 12px;
    padding: 0;
    border-bottom: 1px solid #ededf0;
    white-space: nowrap;
  }

  th {
    height: 13px;
    padding-left: 2px;
    font-weight: 400;
    text-align: left;
  }

  td:first-child {
    padding-left: 4px;
  }
`;

const IconHead = styled.th`
  width: 10px;
  border-left: 1px solid #e4e6ea;

  &:last-child {
    width: 5px;
    overflow: hidden;
  }
`;

const LayerRow = styled.tr`
  font-weight: ${p => (p.$current ? 700 : 400)};
`;

const Swatch = styled.span`
  display: block;
  flex: none;
  width: 7px;
  height: 7px;
  margin-left: 1px;
  background: ${p => p.$color};
  border: 1px solid #222;
`;

const ScrollTrack = styled.div`
  height: 10px;
  margin-top: auto;
  padding: 4px 9px;
  background: #f0f0f1;
`;

const ScrollThumb = styled.div`
  width: 37px;
  height: 1px;
  background: #777;
`;

const PanelTabs = styled.nav`
  position: relative;
  display: flex;
  flex-direction: column;
  width: 18px;
  padding: 2px 1px 0 0;
`;

const PanelTab = styled.button`
  position: relative;
  isolation: isolate;
  display: flex;
  flex-direction: column;
  align-items: center;
  gap: 2px;
  flex: none;
  height: ${p => p.$size}px;
  padding-top: 2px;
  line-height: 8px;

  span {
    writing-mode: vertical-rl;
    white-space: nowrap;
  }

  &::before, &::after {
    content: '';
    position: absolute;
    z-index: -1;
    inset: 0 0 -8px;
    background: #b9bec9;
    clip-path: polygon(0 0, 100% 0, 100% calc(100% - 16px), 0 100%);
  }

  &::after {
    inset: 1px 1px -7px 0;
    background: #fff;
  }
`;

const PanelGear = styled.div`
  position: absolute;
  right: 0;
  bottom: 0;
`;

const SnapBar = styled.div`
  display: flex;
  align-items: center;
  justify-content: space-between;
  width: 35%;
  height: 21px;
  padding: 3px 0 0 2px;
`;

const SnapLabel = styled.label`
  display: flex;
  align-items: center;
  gap: 2px;
  white-space: nowrap;

  &:last-child {
    margin-left: 8px;
  }
`;

const SnapBox = styled.input`
  appearance: none;
  width: 7px;
  height: 7px;
  background: #f6f7f9;
  border: 1px solid ${p => (p.$faint ? '#d3d6dd' : '#777b84')};
  border-radius: 2px;

  &:checked {
    background: #0763bd;
    border-color: #0763bd;
  }

  &:checked::before {
    content: '';
    display: block;
    width: 3px;
    height: 2px;
    margin: 1px;
    border: solid #fff;
    border-width: 0 0 1px 1px;
    transform: rotate(-45deg);
  }
`;

const StatusBar = styled.footer`
  display: flex;
  height: 11px;
  border-top: 1px solid #c6cad4;
  background: #dfe2ea;
  line-height: 10px;
  white-space: nowrap;
`;

const Cell = styled.div`
  display: flex;
  align-items: center;
  justify-content: ${p => (p.$left ? 'flex-start' : 'center')};
  gap: 1px;
  flex: 0 0 ${p => p.$w}px;
  border-right: 1px solid #b7bbc6;
  font-size: ${p => (p.$large ? 8 : 7)}px;

  ${p => p.$on && css`
    background: #eaf1f7;
    font-weight: 700;
  `}
`;

const LensCell = styled.div`
  padding-left: 3px;
`;

export default App;
